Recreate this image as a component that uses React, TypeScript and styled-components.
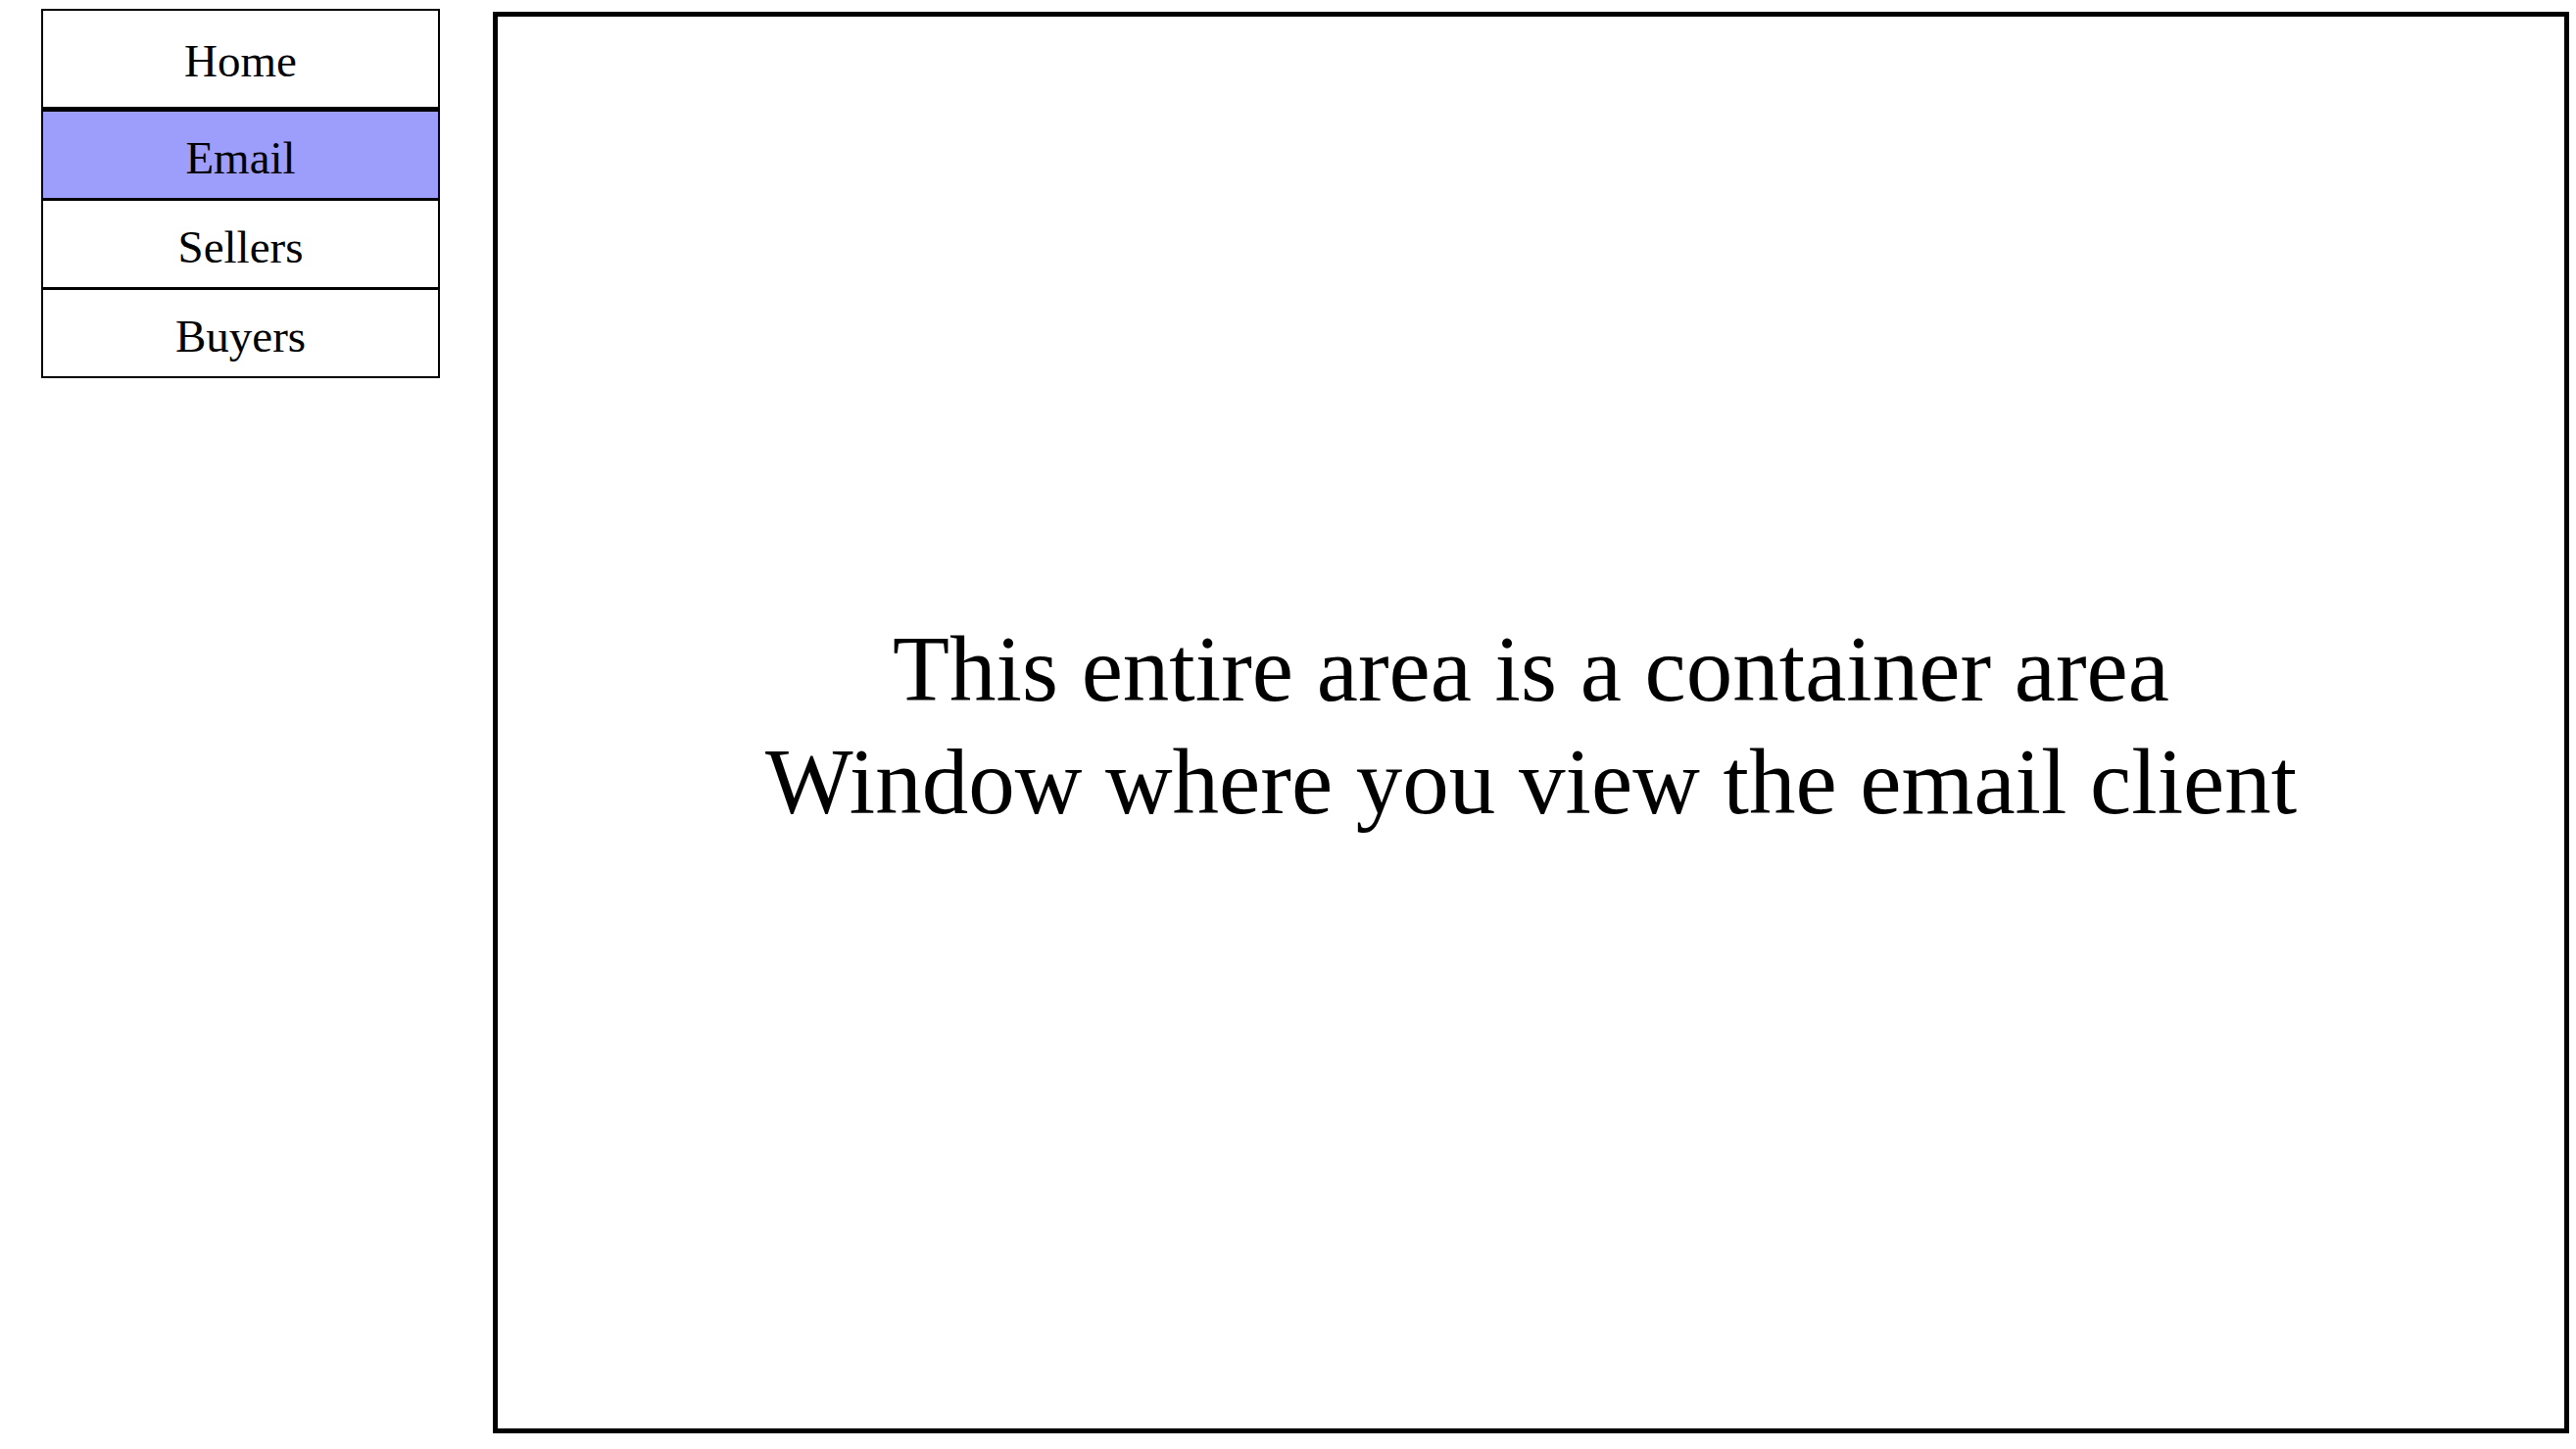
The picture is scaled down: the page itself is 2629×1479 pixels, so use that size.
import React, { useState } from "react";
import styled, { createGlobalStyle } from "styled-components";

const GlobalStyle = createGlobalStyle`
    html, body {
        margin: 0;
        padding: 0;
        background: #ffffff;
    }
    body {
        font-family: "Liberation Serif", "Times New Roman", serif;
        color: #000000;
    }
`;

const Page = styled.div`
    display: flex;
    align-items: flex-start;
    gap: 54px;
    padding: 9px 7px 0 42px;
    width: 2629px;
    height: 1479px;
    box-sizing: border-box;
`;

const Nav = styled.nav`
    display: flex;
    flex-direction: column;
    width: 407px;
    box-sizing: border-box;
    border: 2.5px solid #000;
    flex-shrink: 0;
`;

// heights are content heights; padding and borders are added on top
const NavItem = styled.div<{ $active?: boolean; $tall?: boolean }>`
    display: flex;
    align-items: center;
    justify-content: center;
    height: ${(p) => (p.$tall ? "95px" : "82px")};
    padding-top: ${(p) => (p.$tall ? "3px" : "6px")};
    background: ${(p) => (p.$active ? "#9d9dfb" : "#ffffff")};
    border-top: ${(p) => (p.$active ? "2px" : "0")} solid #000;
    border-bottom: 3px solid #000;
    font-size: 47px;
    cursor: pointer;
    &:last-child {
        border-bottom: none;
    }
`;

const Main = styled.main`
    margin-top: 3px;
    flex: 1;
    height: 1451px;
    box-sizing: border-box;
    border: 5px solid #000;
    display: flex;
    align-items: center;
    justify-content: center;
    padding-top: 6px;
`;

const Message = styled.p`
    margin: 0;
    text-align: center;
    font-size: 95px;
    line-height: 115px;
`;

const items = ["Home", "Email", "Sellers", "Buyers"];

const App = () => {
    const [active, setActive] = useState("Email");

    return (
        <>
            <GlobalStyle />
            <Page>
                <Nav>
                    {items.map((item, i) => (
                        <NavItem
                            key={item}
                            $tall={i === 0}
                            $active={item === active}
                            onClick={() => setActive(item)}
                        >
                            {item}
                        </NavItem>
                    ))}
                </Nav>
                <Main>
                    <Message>
                        This entire area is a container area
                        <br />
                        Window where you view the email client
                    </Message>
                </Main>
            </Page>
        </>
    );
};

export default App;
